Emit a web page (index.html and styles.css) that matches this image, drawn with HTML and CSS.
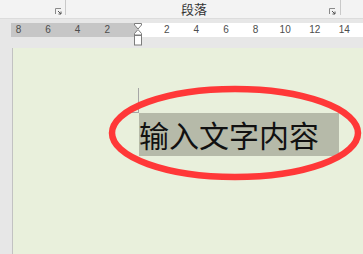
FILE: index.html
```html
<!DOCTYPE html>
<html lang="zh-CN">
<head>
  <meta charset="UTF-8">
  <title>段落</title>
  <link rel="stylesheet" href="styles.css">
</head>
<body>
  <div class="ribbon">
    <div class="group group-left">
      <svg class="launcher" width="7" height="7" viewBox="0 0 7 7">
        <path d="M0.5 6V0.5H6" fill="none" stroke="#8a8a8a"/>
        <path d="M3 3L6 6M6 3.5V6H3.5" fill="none" stroke="#555"/>
      </svg>
    </div>
    <div class="group group-para">
      <span class="group-label">段落</span>
      <svg class="launcher" width="7" height="7" viewBox="0 0 7 7">
        <path d="M0.5 6V0.5H6" fill="none" stroke="#8a8a8a"/>
        <path d="M3 3L6 6M6 3.5V6H3.5" fill="none" stroke="#555"/>
      </svg>
    </div>
  </div>

  <div class="ruler">
    <div class="ruler-margin">
      <span>8</span><span>6</span><span>4</span><span>2</span>
    </div>
    <div class="ruler-body">
      <span>2</span><span>4</span><span>6</span><span>8</span><span>10</span><span>12</span><span>14</span>
    </div>
    <svg class="indent" width="10" height="23" viewBox="0 0 10 23">
      <path d="M1.5 0.5H8.5V2L5 6L1.5 2Z" fill="#fff" stroke="#7c7c7c"/>
      <path d="M5 6.5L8.5 10.5V12H1.5V10.5Z" fill="#fff" stroke="#7c7c7c"/>
      <rect x="1.5" y="12.5" width="7" height="9.5" fill="#fff" stroke="#7c7c7c"/>
    </svg>
  </div>

  <div class="page">
    <div class="margin-mark"></div>
    <div class="selection">输入文字内容</div>
    <svg class="circle" width="258" height="100" viewBox="0 0 258 100">
      <ellipse cx="128" cy="49" rx="123" ry="44" fill="none" stroke="#ff3838" stroke-width="6.5"/>
    </svg>
  </div>
</body>
</html>
```

FILE: styles.css
```css
body {
  margin: 0;
  width: 363px;
  height: 254px;
  overflow: hidden;
  background-color: #e7e7e7;
  font-family: "Liberation Sans", Arial, sans-serif;
  position: relative;
}
.ribbon {
  display: flex;
  height: 18px;
  background-color: #f3f3f3;
  border-bottom: 1px solid #dcdcdc;
}
.group {
  display: flex;
  align-items: flex-end;
  justify-content: flex-end;
  height: 15px;
  box-sizing: border-box;
  border-right: 1px solid #c9c9c9;
}
.group-left {
  width: 66px;
  padding-right: 3px;
}
.group-para {
  width: 275px;
  padding-right: 4px;
  position: relative;
}
.group-label {
  position: absolute;
  left: 115px;
  top: 2px;
  font-family: "Noto Sans CJK SC", sans-serif;
  font-size: 13px;
  line-height: 13px;
  color: #333;
}
.launcher {
  display: block;
}
.ruler {
  display: flex;
  margin-top: 4px;
  margin-left: 11px;
  height: 14px;
  font-size: 10px;
  line-height: 14px;
  color: #4d4d4d;
  position: relative;
}
.ruler-margin {
  display: flex;
  justify-content: flex-end;
  width: 126px;
  padding-right: 15px;
  box-sizing: border-box;
  background-color: #c6c6c6;
}
.ruler-body {
  display: flex;
  flex: 1;
  padding-left: 15px;
  background-color: #fff;
}
.ruler span {
  width: 29.6px;
  text-align: center;
  flex: none;
}
.indent {
  position: absolute;
  left: 122px;
  top: 0;
}
.page {
  position: relative;
  margin-top: 11px;
  margin-left: 12px;
  height: 206px;
  border-left: 1px solid #c2c2c2;
  background-color: #e9f0dc;
  padding-top: 40px;
  padding-left: 114px;
  box-sizing: border-box;
}
.margin-mark {
  width: 11px;
  height: 24px;
  border-right: 1px solid #a6a6a6;
  border-bottom: 1px solid #a6a6a6;
}
.selection {
  margin-left: 12px;
  width: 200px;
  height: 43px;
  background-color: #b6baa9;
  font-family: "Noto Sans CJK SC", sans-serif;
  font-size: 30px;
  line-height: 43px;
  color: #111;
  white-space: nowrap;
}
.circle {
  position: absolute;
  left: 94px;
  top: 36px;
}
```
